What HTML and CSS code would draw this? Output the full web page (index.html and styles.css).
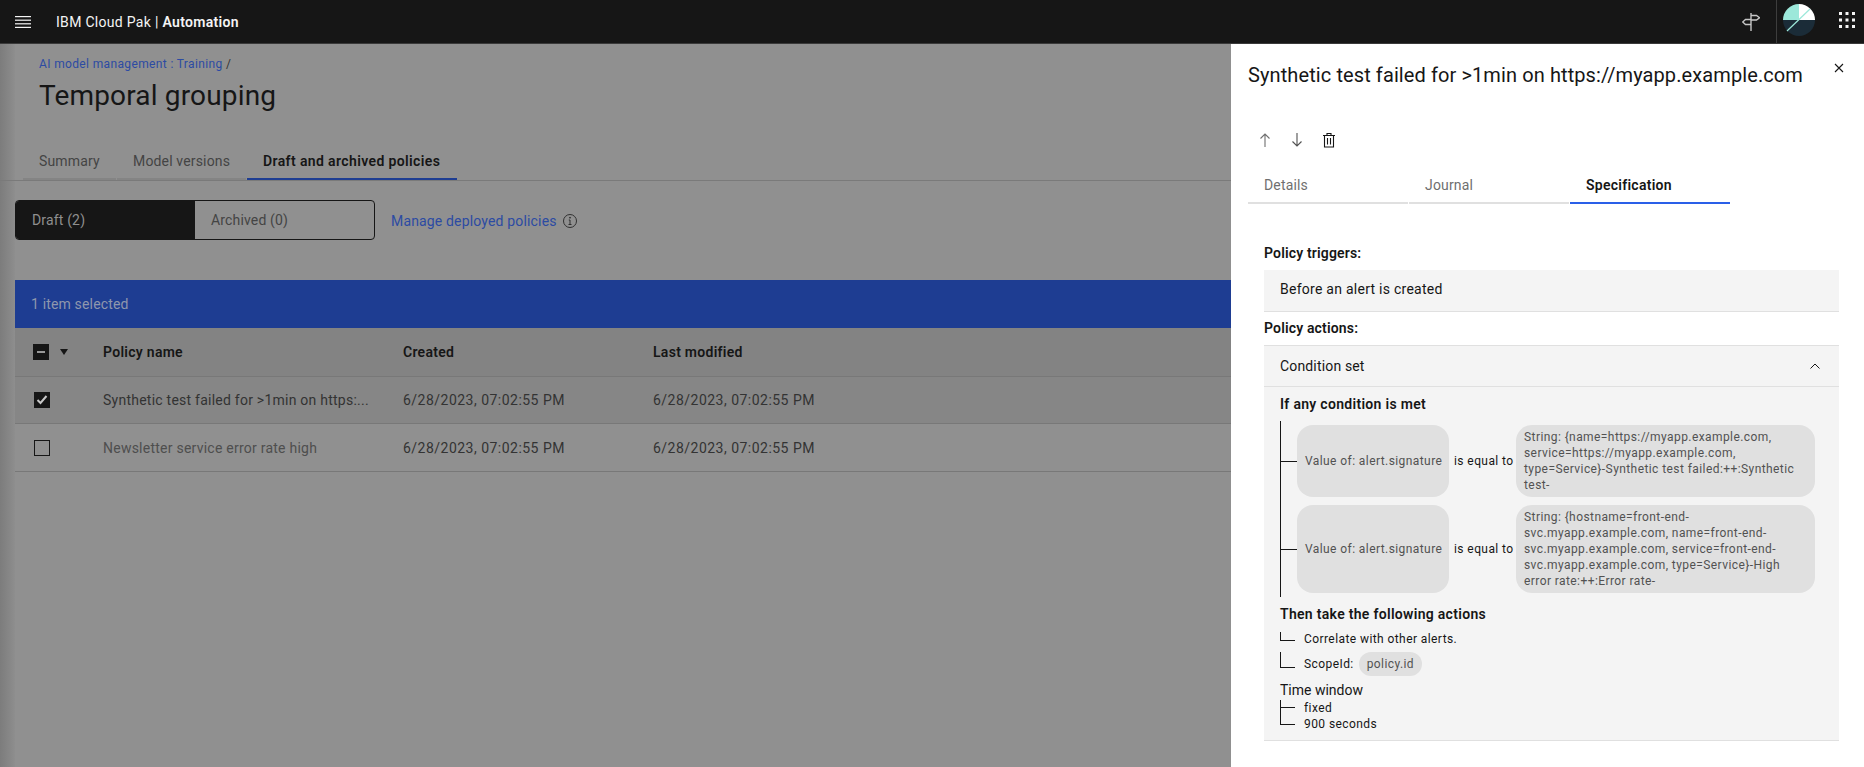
FILE: index.html
```html
<!DOCTYPE html>
<html lang="en">
<head>
  <meta charset="UTF-8">
  <meta name="viewport" content="width=device-width, initial-scale=1.0">
  <link rel="stylesheet" href="styles.css">
  <title>Temporal grouping</title>
</head>
<body>
  <!-- Top bar -->
  <header class="topbar">
    <button class="menu-btn" aria-label="Menu">
      <svg width="16" height="12" viewBox="0 0 16 12"><rect y="0" width="16" height="1.2" fill="#f4f4f4"/><rect y="3.6" width="16" height="1.2" fill="#f4f4f4"/><rect y="7.2" width="16" height="1.2" fill="#f4f4f4"/><rect y="10.8" width="16" height="1.2" fill="#f4f4f4"/></svg>
    </button>
    <div class="product">IBM Cloud Pak | <b>Automation</b></div>
    <div class="tools">
      <button class="tool tool-guide" aria-label="Guide">
        <svg width="18" height="18" viewBox="0 0 18 18" fill="none" stroke="#c6c6c6" stroke-width="1.4"><path d="M9 0v18"/><path d="M9 2.500h5.500l3 2.200-3 2.300H9"/><path d="M9 6.500H3.500L.7 9l2.800 2.500H9"/></svg>
      </button>
      <div class="avatar" aria-label="User">
        <svg width="32" height="32" viewBox="0 0 32 32"><path d="M16 16V0a16 16 0 0 0-16 16z" fill="#9ce8da"/><path d="M16 16V0a16 16 0 0 1 16 16z" fill="#fff"/><path d="M0 16a16 16 0 0 0 32 0z" fill="#1b2c38"/><path d="M4 27L27 5" stroke="#9ce8da" stroke-width="1.200"/></svg>
      </div>
      <button class="tool tool-apps" aria-label="Apps">
        <svg width="16" height="16" viewBox="0 0 16 16" fill="#f4f4f4"><rect width="3" height="3"/><rect x="6.500" width="3" height="3"/><rect x="13" width="3" height="3"/><rect y="6.500" width="3" height="3"/><rect x="6.500" y="6.500" width="3" height="3"/><rect x="13" y="6.500" width="3" height="3"/><rect y="13" width="3" height="3"/><rect x="6.500" y="13" width="3" height="3"/><rect x="13" y="13" width="3" height="3"/></svg>
      </button>
    </div>
  </header>

  <div class="layout">
    <!-- Page behind the side panel -->
    <main class="main">
      <div class="crumbs"><a>AI model management : Training</a> /</div>
      <h1 class="page-title">Temporal grouping</h1>

      <nav class="page-tabs">
        <a class="page-tab tab-summary">Summary</a>
        <a class="page-tab tab-versions">Model versions</a>
        <a class="page-tab tab-drafts active">Draft and archived policies</a>
      </nav>

      <div class="filter-row">
        <div class="switcher">
          <div class="switch on">Draft (2)</div>
          <div class="switch">Archived (0)</div>
        </div>
        <a class="deployed-link">Manage deployed policies</a>
        <svg class="info-icon" width="16" height="16" viewBox="0 0 16 16" fill="none" stroke="#303030"><circle cx="8" cy="8" r="6.500"/><path d="M6.500 11.500h3M8 11.500V7H6.800"/><circle cx="8" cy="4.700" r=".5" fill="#303030"/></svg>
      </div>

      <div class="table-wrap">
        <div class="batch-bar">1 item selected</div>
        <div class="tr th">
          <div class="select-cell">
            <span class="check dark"><span class="dash"></span></span>
            <svg class="caret" width="8" height="6" viewBox="0 0 8 6"><path d="M0 0h8L4 6z" fill="#161616"/></svg>
          </div>
          <div>Policy name</div>
          <div>Created</div>
          <div>Last modified</div>
        </div>
        <div class="tr row-selected">
          <div class="select-cell">
            <span class="check dark inset">
              <svg width="12" height="10" viewBox="0 0 12 10" fill="none" stroke="#c8c8c8" stroke-width="2"><path d="M1.500 5l3 3 6-7"/></svg>
            </span>
          </div>
          <div class="name">Synthetic test failed for &gt;1min on https:...</div>
          <div class="date">6/28/2023, 07:02:55 PM</div>
          <div class="date">6/28/2023, 07:02:55 PM</div>
        </div>
        <div class="tr row-plain">
          <div class="select-cell"><span class="check inset"></span></div>
          <div class="name muted">Newsletter service error rate high</div>
          <div class="date">6/28/2023, 07:02:55 PM</div>
          <div class="date">6/28/2023, 07:02:55 PM</div>
        </div>
      </div>
    </main>

    <!-- Side panel -->
    <aside class="panel">
      <div class="panel-head">
        <h2 class="panel-title">Synthetic test failed for &gt;1min on https://myapp.example.com</h2>
        <button class="close-btn" aria-label="Close">
          <svg width="16" height="16" viewBox="0 0 16 16" stroke="#161616" stroke-width="1.100"><path d="M4 4l8 8M12 4l-8 8"/></svg>
        </button>
      </div>

      <div class="panel-actions">
        <svg width="16" height="16" viewBox="0 0 16 16" fill="none" stroke="#6f6f6f" stroke-width="1.100"><path d="M8 15V2M3.500 6.500L8 2l4.500 4.500"/></svg>
        <svg width="16" height="16" viewBox="0 0 16 16" fill="none" stroke="#525252" stroke-width="1.100"><path d="M8 1v13M3.500 9.500L8 14l4.500-4.500"/></svg>
        <svg width="16" height="16" viewBox="0 0 16 16" fill="none" stroke="#161616" stroke-width="1.100"><path d="M2 3.500h12M6 3.500V1.500h4v2M3.500 3.500v11.500h9V3.500M6.500 6v6.500M9.500 6v6.500"/></svg>
      </div>

      <nav class="panel-tabs">
        <a class="panel-tab">Details</a>
        <a class="panel-tab">Journal</a>
        <a class="panel-tab active">Specification</a>
      </nav>

      <section class="spec">
        <h3 class="spec-label first">Policy triggers:</h3>
        <div class="trigger-box">Before an alert is created</div>
        <h3 class="spec-label">Policy actions:</h3>

        <div class="accordion">
          <div class="accordion-head">
            <span>Condition set</span>
            <svg width="16" height="16" viewBox="0 0 16 16" fill="none" stroke="#161616"><path d="M3.500 10.500L8 6l4.500 4.500"/></svg>
          </div>
          <div class="accordion-body">
            <h4 class="rule-title">If any condition is met</h4>
            <div class="conditions">
              <div class="condition">
                <span class="branch"></span>
                <div class="pill pill-field">Value of: alert.signature</div>
                <div class="operator">is equal to</div>
                <div class="pill pill-value">String: {name=https://myapp.example.com,<br>service=https://myapp.example.com,<br>type=Service}-Synthetic test failed:++:Synthetic<br>test-</div>
              </div>
              <div class="condition">
                <span class="branch"></span>
                <div class="pill pill-field">Value of: alert.signature</div>
                <div class="operator">is equal to</div>
                <div class="pill pill-value">String: {hostname=front-end-<br>svc.myapp.example.com, name=front-end-<br>svc.myapp.example.com, service=front-end-<br>svc.myapp.example.com, type=Service}-High<br>error rate:++:Error rate-</div>
              </div>
            </div>

            <h4 class="rule-title then">Then take the following actions</h4>
            <div class="action correlate"><span class="elbow"></span>Correlate with other alerts.</div>
            <div class="action scope"><span class="elbow"></span>ScopeId:<span class="tag">policy.id</span></div>

            <div class="window-title">Time window</div>
            <div class="window-item fixed"><span class="elbow"></span>fixed</div>
            <div class="window-item seconds"><span class="elbow"></span>900 seconds</div>
          </div>
        </div>
      </section>
    </aside>
  </div>
</body>
</html>
```

FILE: styles.css
```css
* {
  box-sizing: border-box;
}

html,
body {
  height: 100%;
}

body {
  margin: 0;
  overflow: hidden;
  font-family: Roboto, "Noto Sans", sans-serif;
  font-size: 14px;
  letter-spacing: 0.16px;
  color: #161616;
  background-color: #fff;
}

button {
  padding: 0;
  border: 0;
  background: none;
  display: flex;
}

h1,
h2,
h3,
h4 {
  margin: 0;
  font-size: 14px;
  font-weight: 400;
}

/* Top bar */
.topbar {
  display: flex;
  align-items: center;
  height: 44px;
  background-color: #161616;
  border-bottom: 1px solid #3a3a3a;
  color: #f4f4f4;
}

.menu-btn {
  margin-left: 15px;
}

.product {
  margin-left: 25px;
  font-size: 14px;
  letter-spacing: 0.3px;
  white-space: pre;
}

.product b {
  font-weight: 600;
}

.tools {
  display: flex;
  align-items: center;
  align-self: stretch;
  margin-left: auto;
}

.tool-guide {
  margin-right: 16px;
}

.avatar {
  display: flex;
  align-items: center;
  align-self: stretch;
  padding-left: 6px;
  padding-bottom: 3px;
  border-left: 1px solid #3d3d3d;
}

.tool-apps {
  margin: 0 9px 4px 24px;
}

/* Page */
.layout {
  display: flex;
  height: 723px;
}

.main {
  width: 1231px;
  flex: none;
  background: linear-gradient(to right, #7c7c7c 0, #8a8a8a 12px, #8e8e8e 15px, #909090 15px);
}

.crumbs {
  padding: 12px 0 0 39px;
  font-size: 12px;
  line-height: 16px;
  letter-spacing: 0.36px;
  color: #333;
}

.crumbs a {
  color: #2c4ba3;
}

.page-title {
  margin: 6px 0 0 39px;
  font-size: 28px;
  line-height: 36px;
  color: #161616;
}

.page-tabs {
  display: flex;
  gap: 1px;
  margin-top: 26px;
  padding-left: 23px;
  border-bottom: 1px solid #7a7a7a;
}

.page-tab {
  height: 40px;
  padding: 12px 16px 0;
  line-height: 18px;
  white-space: nowrap;
  border-bottom: 2px solid #848484;
  color: #444;
}

.tab-summary {
  width: 93px;
}

.tab-versions {
  width: 129px;
}

.tab-drafts {
  width: 210px;
}

.page-tab.active {
  color: #161616;
  font-weight: 600;
  letter-spacing: 0.38px;
  border-bottom-color: #1e3d92;
}

.filter-row {
  display: flex;
  align-items: center;
  margin: 19px 0 0 15px;
}

.switcher {
  display: flex;
  width: 360px;
  height: 40px;
  border: 1px solid #161616;
  border-radius: 4px;
  overflow: hidden;
}

.switch {
  flex: 1;
  padding: 0 16px;
  line-height: 38px;
  color: #444;
}

.switch.on {
  background-color: #161616;
  color: #8f8f8f;
}

.deployed-link {
  margin: 2px 0 0 16px;
  color: #2c4ba3;
}

.info-icon {
  margin: 2px 0 0 5px;
}

/* Table */
.table-wrap {
  margin: 40px 0 0 15px;
}

.batch-bar {
  height: 48px;
  padding-left: 16px;
  line-height: 48px;
  background-color: #1e3d92;
  color: #8f97ad;
}

.tr {
  display: grid;
  grid-template-columns: 88px 300px 250px 1fr;
  align-items: center;
  height: 47px;
  border-bottom: 1px solid #787878;
  color: #333;
}

.th {
  height: 49px;
  background-color: #838383;
  color: #161616;
  font-weight: 600;
  letter-spacing: 0.28px;
}

.row-selected {
  background-color: #868686;
}

.row-plain {
  height: 48px;
}

.name {
  letter-spacing: 0.24px;
}

.date {
  letter-spacing: 0.48px;
}

.muted {
  color: #4e4e4e;
}

.select-cell {
  display: flex;
  align-items: center;
  padding-left: 18px;
}

.check {
  display: flex;
  align-items: center;
  justify-content: center;
  width: 16px;
  height: 16px;
  border: 1px solid #161616;
}

.check.dark {
  background-color: #161616;
}

.check.inset {
  margin-left: 1px;
}

.dash {
  width: 8px;
  height: 2px;
  background-color: #999;
}

.caret {
  margin-left: 11px;
}

/* Side panel */
.panel {
  flex: 1;
  padding: 17px 0 0 17px;
  background-color: #fff;
}

.panel-head {
  display: flex;
  justify-content: space-between;
  padding-right: 17px;
}

.panel-title {
  font-size: 20px;
  line-height: 28px;
  letter-spacing: 0.1px;
}

.close-btn {
  margin-top: -1px;
  align-self: flex-start;
}

.panel-actions {
  display: flex;
  gap: 16px;
  margin-top: 43px;
  padding-left: 9px;
}

.panel-tabs {
  display: flex;
  gap: 1px;
  margin-top: 16px;
}

.panel-tab {
  width: 160px;
  height: 40px;
  padding: 12px 16px 0;
  line-height: 18px;
  border-bottom: 2px solid #e0e0e0;
  color: #6f6f6f;
}

.panel-tab.active {
  color: #161616;
  font-weight: 600;
  letter-spacing: 0.26px;
  border-bottom-color: #2a5fe8;
}

.spec {
  width: 591px;
  padding: 40px 0 0 16px;
}

.spec-label {
  margin-top: 7px;
  font-weight: 600;
  line-height: 18px;
}

.spec-label.first {
  margin-top: 0;
}

.trigger-box {
  margin-top: 8px;
  padding: 10px 16px 0;
  height: 42px;
  line-height: 18px;
  letter-spacing: 0.26px;
  background-color: #f4f4f4;
  border-bottom: 1px solid #e0e0e0;
}

.accordion {
  margin-top: 8px;
  background-color: #f4f4f4;
  border-top: 1px solid #e0e0e0;
  border-bottom: 1px solid #e0e0e0;
}

.accordion-head {
  display: flex;
  justify-content: space-between;
  align-items: center;
  height: 41px;
  padding: 0 16px;
  border-bottom: 1px solid #e0e0e0;
}

.accordion-body {
  height: 353px;
  padding: 8px 16px 0;
}

.rule-title {
  font-weight: 600;
  line-height: 18px;
  letter-spacing: 0.3px;
}

.conditions {
  display: flex;
  flex-direction: column;
  gap: 8px;
  margin-top: 8px;
  padding: 4px 0;
  border-left: 1px solid #161616;
}

.condition {
  display: flex;
  align-items: stretch;
  font-size: 12px;
  line-height: 16px;
  letter-spacing: 0.42px;
}

.branch {
  align-self: center;
  width: 16px;
  height: 1px;
  background-color: #161616;
}

.pill {
  background-color: #e0e0e0;
  border-radius: 16px;
  color: #525252;
  white-space: nowrap;
}

.pill-field {
  display: flex;
  align-items: center;
  width: 152px;
  padding-left: 8px;
}

.operator {
  display: flex;
  align-items: center;
  width: 67px;
  padding-left: 5px;
}

.pill-value {
  width: 299px;
  padding: 4px 8px;
}

.then {
  margin-top: 8px;
}

.action,
.window-item {
  display: flex;
  font-size: 12px;
  line-height: 16px;
  letter-spacing: 0.42px;
}

.elbow {
  flex: none;
  width: 15px;
  margin-right: 9px;
  border-left: 1px solid #161616;
  border-bottom: 1px solid #161616;
}

.action.correlate {
  height: 18px;
  margin-top: 7px;
  line-height: 18px;
}

.correlate .elbow {
  height: 9px;
  margin-top: 2px;
}

.action.scope {
  align-items: flex-start;
  height: 24px;
  margin-top: 4px;
  line-height: 24px;
}

.scope .elbow {
  height: 16px;
}

.tag {
  margin-left: 5px;
  padding: 0 8px;
  background-color: #e0e0e0;
  border-radius: 12px;
  color: #525252;
}

.window-title {
  margin-top: 5px;
  line-height: 18px;
  letter-spacing: 0;
}

.window-item {
  height: 16px;
}

.fixed {
  margin-top: 1px;
}

.fixed .elbow {
  height: 8px;
}

.seconds .elbow {
  height: 17px;
  margin-top: -8px;
}
```
